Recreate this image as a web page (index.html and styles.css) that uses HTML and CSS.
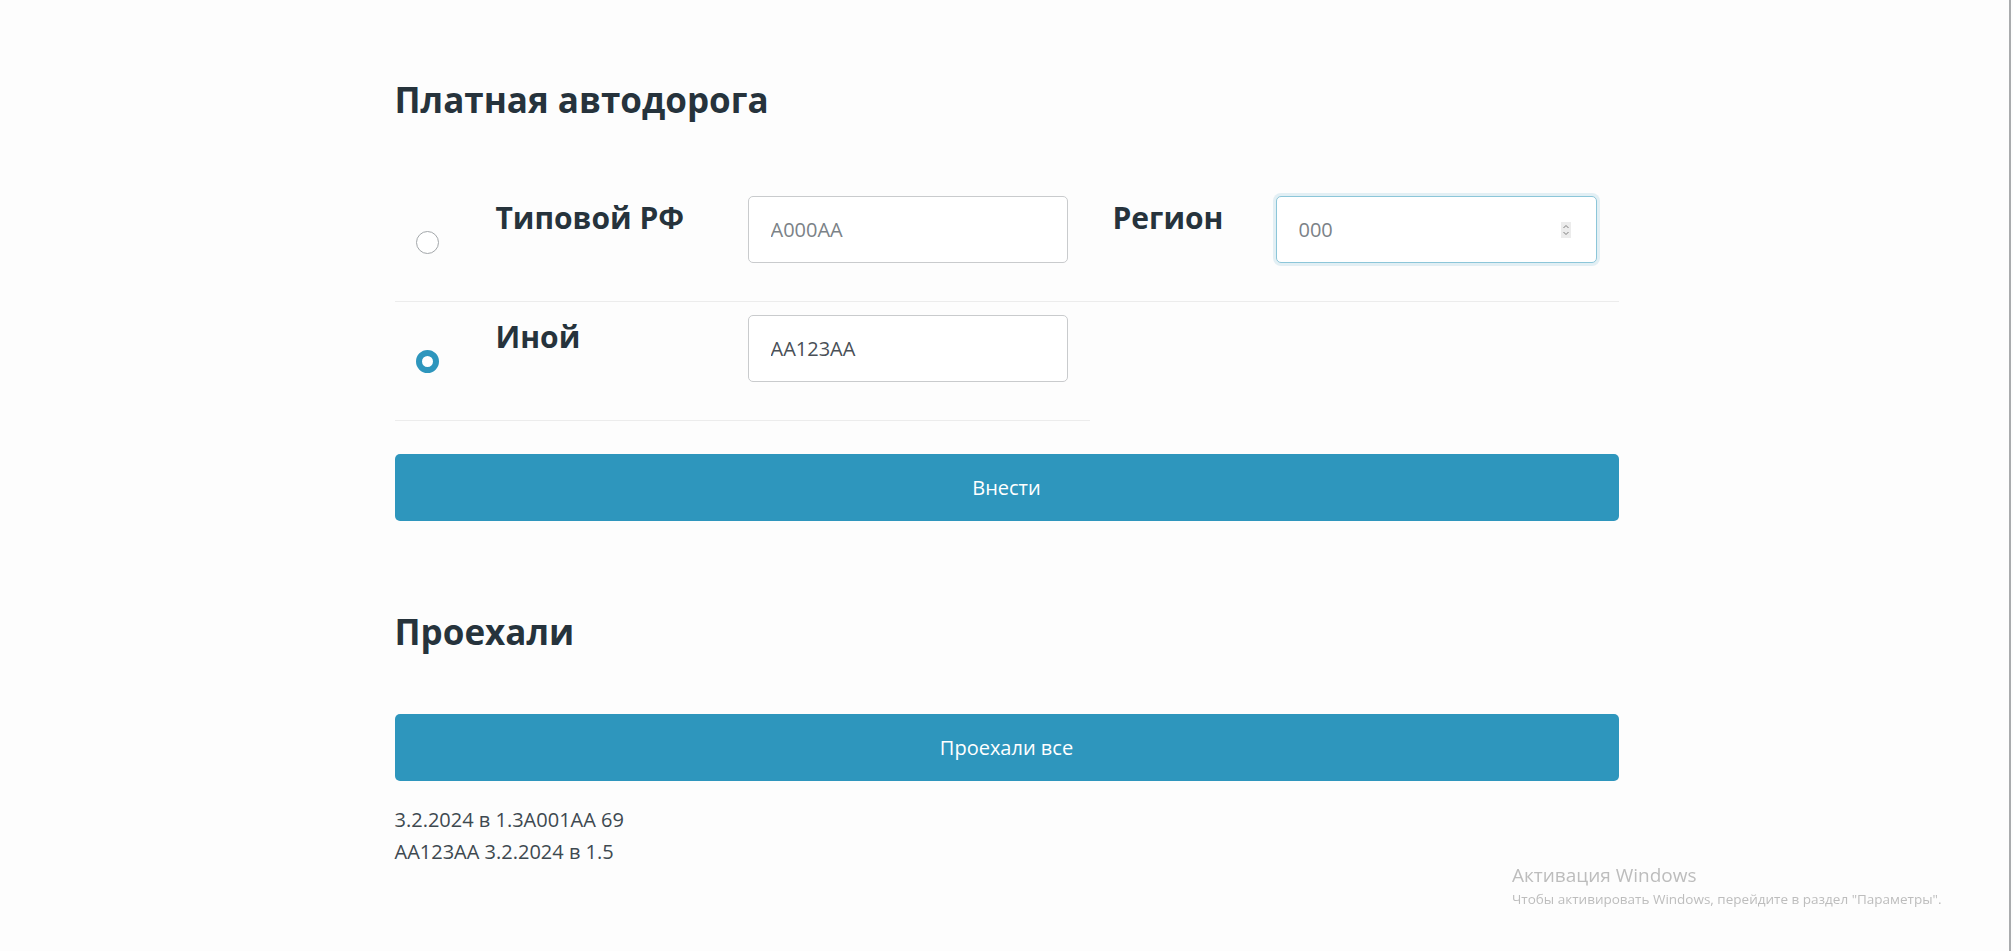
FILE: index.html
```html
<!DOCTYPE html>
<html lang="ru">
<head>
<meta charset="utf-8">
<title>Платная автодорога</title>
<link rel="stylesheet" href="styles.css">
</head>
<body>
<main class="container">
  <h3 class="title title-first">Платная автодорога</h3>
  <div class="plate-table">
    <div class="cell cell-radio"><span class="radio"></span></div>
    <div class="cell cell-label"><h4 class="label">Типовой РФ</h4></div>
    <div class="cell cell-input"><input class="field" type="text" placeholder="A000AA"></div>
    <div class="cell cell-label cell-region"><h4 class="label">Регион</h4></div>
    <div class="cell cell-input">
      <div class="number-wrap">
        <input class="field field-focus" type="number" placeholder="000">
        <span class="spin" aria-hidden="true">
          <svg width="10" height="16" viewBox="0 0 10 16"><rect width="10" height="16" fill="#ececec"/><path d="M2.5 6 L5 3.5 L7.5 6" fill="none" stroke="#7d7d7d" stroke-width="1"/><path d="M2.5 10 L5 12.5 L7.5 10" fill="none" stroke="#7d7d7d" stroke-width="1"/></svg>
        </span>
      </div>
    </div>
    <div class="cell cell-radio"><span class="radio radio-checked"></span></div>
    <div class="cell cell-label"><h4 class="label">Иной</h4></div>
    <div class="cell cell-input"><input class="field" type="text" value="AA123AA"></div>
  </div>
  <button class="btn btn-submit" type="button">Внести</button>
  <h3 class="title title-second">Проехали</h3>
  <button class="btn btn-all" type="button">Проехали все</button>
  <div class="log">
    <div class="log-line">3.2.2024 в 1.3A001AA 69</div>
    <div class="log-line">AA123AA 3.2.2024 в 1.5</div>
  </div>
</main>
<div class="watermark">
  <div class="wm-title">Активация Windows</div>
  <div class="wm-text">Чтобы активировать Windows, перейдите в раздел "Параметры".</div>
</div>
<div class="window-edge"></div>
</body>
</html>
```
FILE: styles.css
```css
html, body {
  margin: 0;
  padding: 0;
  background: #fdfdfd;
}
body {
  font-family: "Open Sans", "Noto Sans", sans-serif;
  color: #3e4950;
  font-size: 20px;
}
.container {
  width: 1224px;
  margin: 0 auto;
  display: flex;
  flex-direction: column;
}
.title {
  margin: 0;
  font-size: 35px;
  line-height: 42px;
  font-weight: 700;
  color: #26333c;
}
.title-first {
  margin-top: 79px;
}
.plate-table {
  margin-top: 62px;
  display: grid;
  grid-template-columns: 80px 251px 364px 164px 365px;
  grid-auto-rows: 119px;
}
.cell {
  box-sizing: border-box;
  border-bottom: 1px solid #ececec;
}
.cell-radio {
  display: flex;
  align-items: center;
  padding-left: 21px;
}
.cell-label {
  padding: 17px 0 0 21px;
}
.cell-region {
  padding-left: 23px;
}
.cell-input {
  padding: 13px 22px 0 22px;
}
.label {
  margin: 0;
  font-size: 30px;
  line-height: 36px;
  font-weight: 700;
  color: #26333c;
}
.radio {
  width: 23px;
  height: 23px;
  box-sizing: border-box;
  border-radius: 50%;
  border: 1.5px solid #a3a7aa;
  background: #fff;
}
.radio-checked {
  border: 6.5px solid #2e96bd;
}
.field {
  display: block;
  width: 100%;
  height: 67px;
  box-sizing: border-box;
  border: 1px solid #c9cbcd;
  border-radius: 5px;
  background: #fff;
  padding: 0 22px;
  font-family: "Open Sans", "Noto Sans", sans-serif;
  font-size: 20px;
  color: #495057;
  outline: none;
  appearance: none;
}
.field::placeholder {
  color: #7b8287;
}
.field-focus {
  border-color: #8cc6d9;
  box-shadow: 0 0 0 3px rgba(46, 150, 189, 0.13);
  -moz-appearance: textfield;
}
.field-focus::-webkit-inner-spin-button,
.field-focus::-webkit-outer-spin-button {
  -webkit-appearance: none;
  margin: 0;
}
.number-wrap {
  position: relative;
}
.spin {
  position: absolute;
  right: 26px;
  top: 26px;
  width: 10px;
  height: 16px;
  display: block;
}
.spin svg {
  display: block;
}
.btn {
  display: block;
  width: 100%;
  height: 67px;
  border: 0;
  border-radius: 5px;
  background: #2e96bd;
  color: #fff;
  font-family: "Open Sans", "Noto Sans", sans-serif;
  font-size: 20px;
  padding: 0;
}
.btn-submit {
  margin-top: 33px;
}
.title-second {
  margin-top: 90px;
}
.btn-all {
  margin-top: 61px;
}
.log {
  margin-top: 23px;
}
.log-line {
  line-height: 32px;
  color: #3e4950;
}
.watermark {
  position: fixed;
  left: 1512px;
  top: 862px;
  color: #bdbdbd;
  font-family: "Open Sans", "Noto Sans", sans-serif;
}
.wm-title {
  font-size: 19px;
  line-height: 26px;
}
.wm-text {
  font-size: 13.5px;
  line-height: 22px;
}
.window-edge {
  position: fixed;
  top: 0;
  bottom: 0;
  left: 2009px;
  width: 2px;
  background: #a9abad;
}
```
